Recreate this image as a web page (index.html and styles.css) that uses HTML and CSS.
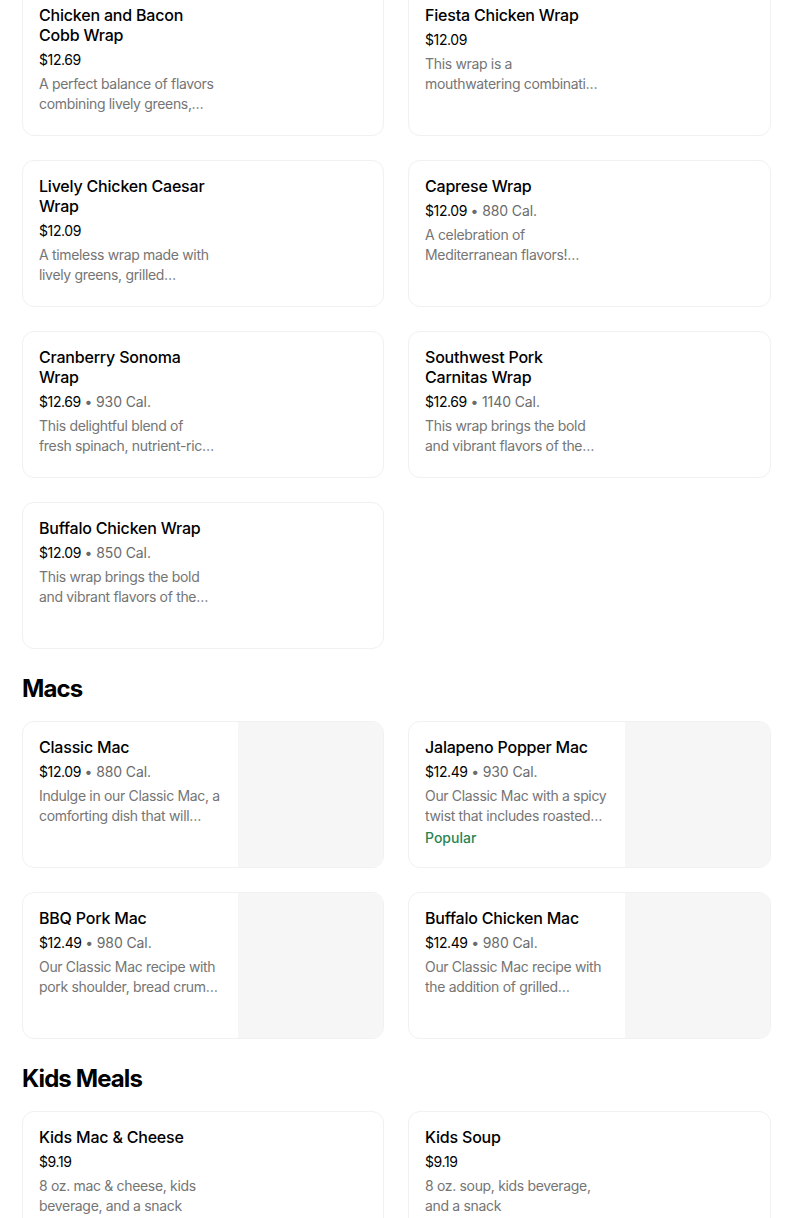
FILE: index.html
```html
<!DOCTYPE html>
<html lang="en">
<head>
<meta charset="utf-8">
<title>Menu</title>
<link rel="stylesheet" href="styles.css">
</head>
<body>
<main class="menu">
  <section class="section section-first">
    <div class="grid">
      <article class="card">
        <div class="card-body">
          <h3 class="title">Chicken and Bacon Cobb Wrap</h3>
          <p class="price">$12.69</p>
          <p class="desc">A perfect balance of flavors combining lively greens, grilled chicken, applewood smoked bacon and more</p>
        </div>
        <div class="thumb thumb-empty"></div>
      </article>
      <article class="card">
        <div class="card-body">
          <h3 class="title">Fiesta Chicken Wrap</h3>
          <p class="price">$12.09</p>
          <p class="desc">This wrap is a mouthwatering combination of flavors and textures with grilled chicken</p>
        </div>
        <div class="thumb thumb-empty"></div>
      </article>
      <article class="card">
        <div class="card-body">
          <h3 class="title">Lively Chicken Caesar Wrap</h3>
          <p class="price">$12.09</p>
          <p class="desc">A timeless wrap made with lively greens, grilled chicken, parmesan and caesar dressing</p>
        </div>
        <div class="thumb thumb-empty"></div>
      </article>
      <article class="card">
        <div class="card-body">
          <h3 class="title">Caprese Wrap</h3>
          <p class="price">$12.09 <span class="cal">• 880 Cal.</span></p>
          <p class="desc">A celebration of Mediterranean flavors! Fresh mozzarella, tomatoes and basil pesto</p>
        </div>
        <div class="thumb thumb-empty"></div>
      </article>
      <article class="card">
        <div class="card-body">
          <h3 class="title">Cranberry Sonoma Wrap</h3>
          <p class="price">$12.69 <span class="cal">• 930 Cal.</span></p>
          <p class="desc">This delightful blend of fresh spinach, nutrient-rich kale, cranberries and chicken</p>
        </div>
        <div class="thumb thumb-empty"></div>
      </article>
      <article class="card">
        <div class="card-body">
          <h3 class="title">Southwest Pork Carnitas Wrap</h3>
          <p class="price">$12.69 <span class="cal">• 1140 Cal.</span></p>
          <p class="desc">This wrap brings the bold and vibrant flavors of the Southwest with slow roasted pork</p>
        </div>
        <div class="thumb thumb-empty"></div>
      </article>
      <article class="card">
        <div class="card-body">
          <h3 class="title">Buffalo Chicken Wrap</h3>
          <p class="price">$12.09 <span class="cal">• 850 Cal.</span></p>
          <p class="desc">This wrap brings the bold and vibrant flavors of the classic buffalo chicken</p>
        </div>
        <div class="thumb thumb-empty"></div>
      </article>
    </div>
  </section>

  <section class="section">
    <h2 class="section-title">Macs</h2>
    <div class="grid">
      <article class="card">
        <div class="card-body">
          <h3 class="title">Classic Mac</h3>
          <p class="price">$12.09 <span class="cal">• 880 Cal.</span></p>
          <p class="desc">Indulge in our Classic Mac, a comforting dish that will transport you back to childhood</p>
        </div>
        <div class="thumb"></div>
      </article>
      <article class="card">
        <div class="card-body">
          <h3 class="title">Jalapeno Popper Mac</h3>
          <p class="price">$12.49 <span class="cal">• 930 Cal.</span></p>
          <p class="desc">Our Classic Mac with a spicy twist that includes roasted jalapenos and bread crumbs</p>
          <p class="badge">Popular</p>
        </div>
        <div class="thumb"></div>
      </article>
      <article class="card">
        <div class="card-body">
          <h3 class="title">BBQ Pork Mac</h3>
          <p class="price">$12.49 <span class="cal">• 980 Cal.</span></p>
          <p class="desc">Our Classic Mac recipe with pork shoulder, bread crumbs and BBQ sauce</p>
        </div>
        <div class="thumb"></div>
      </article>
      <article class="card">
        <div class="card-body">
          <h3 class="title">Buffalo Chicken Mac</h3>
          <p class="price">$12.49 <span class="cal">• 980 Cal.</span></p>
          <p class="desc">Our Classic Mac recipe with the addition of grilled chicken and buffalo sauce</p>
        </div>
        <div class="thumb"></div>
      </article>
    </div>
  </section>

  <section class="section">
    <h2 class="section-title">Kids Meals</h2>
    <div class="grid">
      <article class="card">
        <div class="card-body">
          <h3 class="title">Kids Mac &amp; Cheese</h3>
          <p class="price">$9.19</p>
          <p class="desc">8 oz. mac &amp; cheese, kids beverage, and a snack</p>
        </div>
        <div class="thumb thumb-empty"></div>
      </article>
      <article class="card">
        <div class="card-body">
          <h3 class="title">Kids Soup</h3>
          <p class="price">$9.19</p>
          <p class="desc">8 oz. soup, kids beverage, and a snack</p>
        </div>
        <div class="thumb thumb-empty"></div>
      </article>
    </div>
  </section>
</main>
</body>
</html>
```

FILE: styles.css
```css
* {
  box-sizing: border-box;
}

html, body {
  margin: 0;
  padding: 0;
  background: #ffffff;
}

body {
  font-family: Inter, Roboto, "Liberation Sans", Arial, sans-serif;
  color: #000000;
  -webkit-font-smoothing: antialiased;
}

.menu {
  width: 771px;
  padding-left: 22px;
}

.section-first {
  margin-top: -11px;
}

.section {
  padding-bottom: 24px;
}

.section-title {
  margin: 0 0 16px;
  font-size: 24px;
  line-height: 32px;
  font-weight: 700;
  letter-spacing: -0.9px;
}

.grid {
  display: grid;
  grid-template-columns: 362px 363px;
  column-gap: 24px;
  row-gap: 24px;
}

.card {
  display: flex;
  height: 147px;
  border: 1px solid #f1f1f1;
  border-radius: 12px;
  overflow: hidden;
  background: #ffffff;
}

.card-body {
  flex: 1;
  min-width: 0;
  padding: 15px 16px 16px;
}

.thumb {
  flex: 0 0 145px;
  background: #f6f6f6;
}

.thumb-empty {
  flex-basis: 151px;
  background: transparent;
}

.title {
  margin: 0;
  font-size: 16px;
  line-height: 20px;
  font-weight: 500;
  color: #000000;
  letter-spacing: -0.2px;
}

.price {
  margin: 5px 0 0;
  font-size: 14px;
  line-height: 20px;
  color: #000000;
  letter-spacing: -0.4px;
}

.cal {
  color: #6b6b6b;
  letter-spacing: -0.1px;
}

.desc {
  margin: 4px 0 0;
  font-size: 14px;
  line-height: 20px;
  color: #757575;
  letter-spacing: -0.33px;
  display: -webkit-box;
  -webkit-line-clamp: 2;
  -webkit-box-orient: vertical;
  overflow: hidden;
}

.badge {
  margin: 2px 0 0;
  font-size: 14px;
  line-height: 20px;
  font-weight: 500;
  color: #2a8553;
}
```
